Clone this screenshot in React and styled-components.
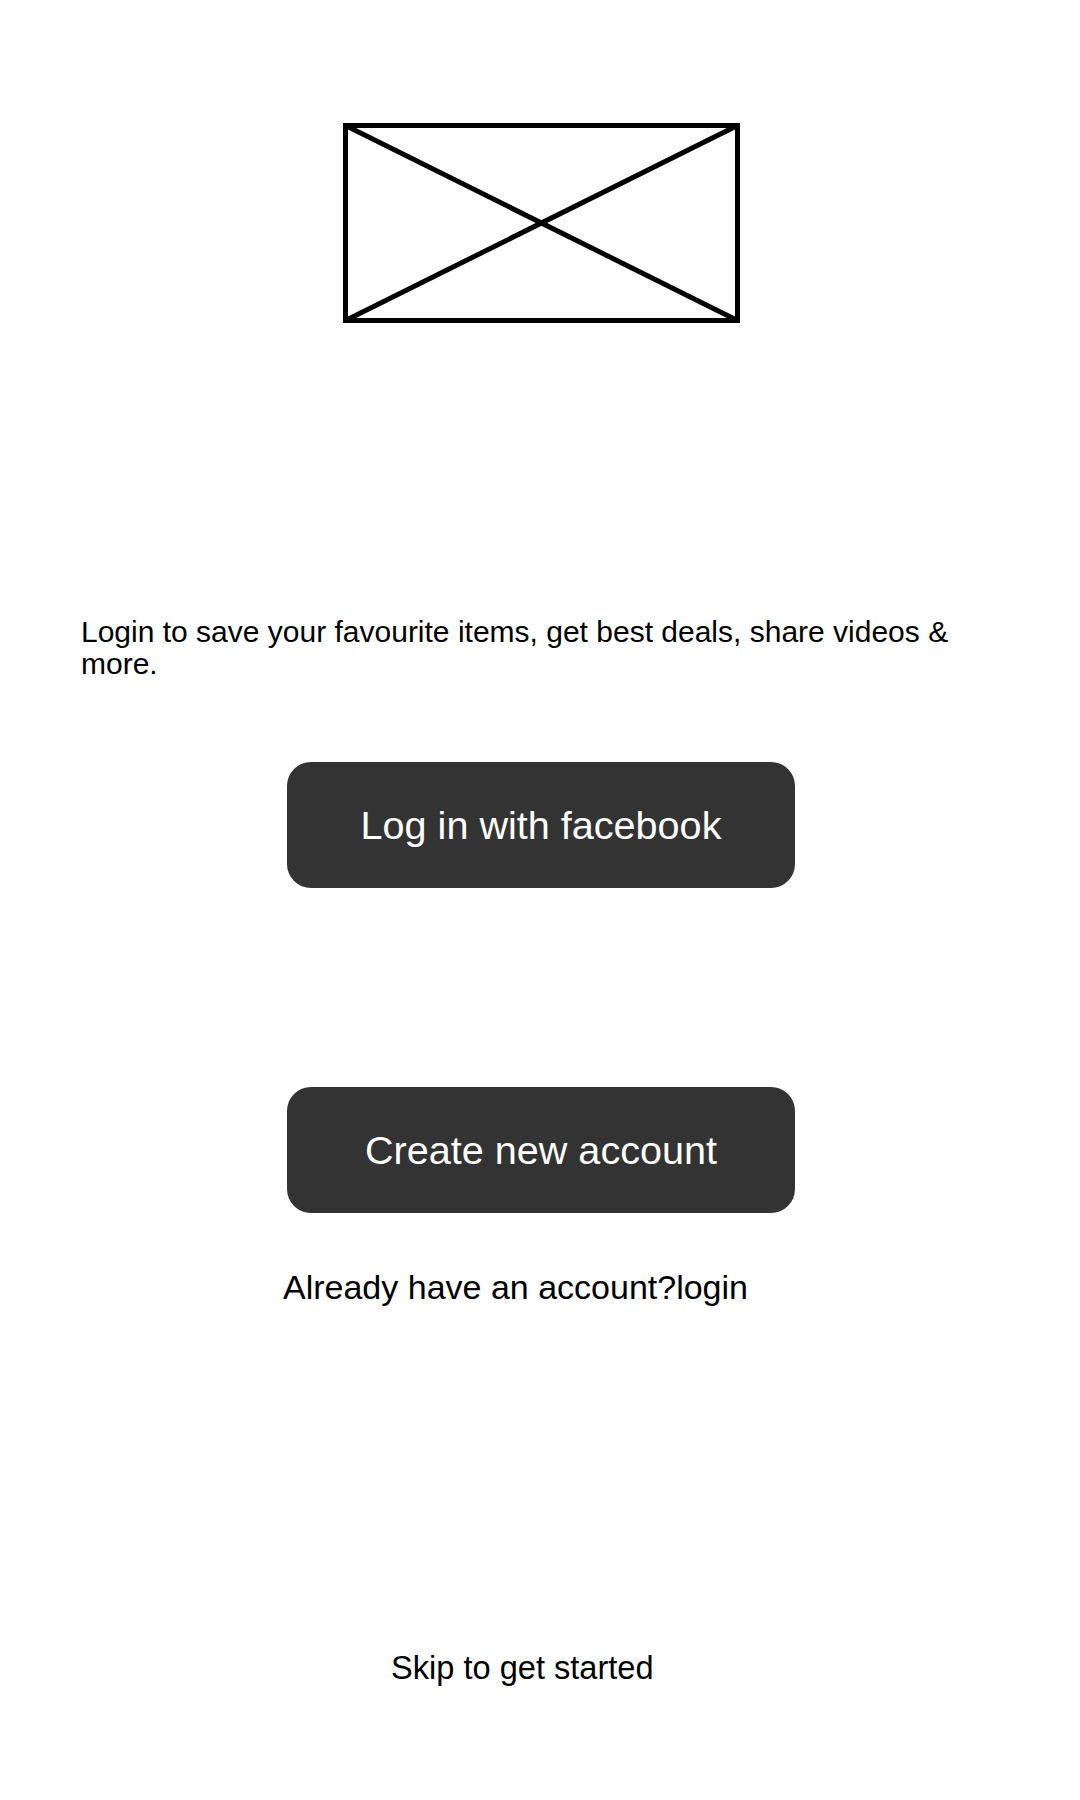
import React from "react";
import styled, { createGlobalStyle } from "styled-components";

const GlobalStyle = createGlobalStyle`
  body {
    margin: 0;
    background: #fff;
    font-family: "Liberation Sans", Arial, sans-serif;
    color: #000;
  }
`;

const Page = styled.div`
  width: 1080px;
  min-height: 1800px;
  display: flex;
  flex-direction: column;
  align-items: flex-start;
  padding-top: 123px;
  box-sizing: border-box;
`;

const Placeholder = styled.svg`
  display: block;
  margin-left: 343px;
  width: 397px;
  height: 200px;
`;

const Intro = styled.p`
  margin: 293px 0 0;
  padding: 0 81px;
  width: 100%;
  box-sizing: border-box;
  font-size: 30px;
  line-height: 32px;
`;

const DarkButton = styled.button`
  margin-top: ${(p) => p.$gap}px;
  margin-left: 287px;
  width: 508px;
  height: 126px;
  border: none;
  border-radius: 24px;
  background: #333333;
  color: #fff;
  font-family: "Liberation Sans", Arial, sans-serif;
  font-size: 39.6px;
  display: flex;
  align-items: center;
  justify-content: center;
  cursor: pointer;
`;

const LinkLine = styled.div`
  margin-top: ${(p) => p.$gap}px;
  padding-left: ${(p) => p.$indent}px;
  font-size: ${(p) => p.$size}px;
  line-height: ${(p) => p.$lh}px;
`;

const App = () => {
  return (
    <>
      <GlobalStyle />
      <Page>
        <Placeholder viewBox="0 0 397 200">
          <rect x="2.5" y="2.5" width="392" height="195" fill="none" stroke="#000" strokeWidth="5" />
          <line x1="2.5" y1="2.5" x2="394.5" y2="197.5" stroke="#000" strokeWidth="5" />
          <line x1="394.5" y1="2.5" x2="2.5" y2="197.5" stroke="#000" strokeWidth="5" />
        </Placeholder>
        <Intro>
          Login to save your favourite items, get best deals, share videos &amp; more.
        </Intro>
        <DarkButton $gap={82}>Log in with facebook</DarkButton>
        <DarkButton $gap={199}>Create new account</DarkButton>
        <LinkLine $gap={55} $indent={283} $size={34} $lh={39}>
          Already have an account?login
        </LinkLine>
        <LinkLine $gap={342} $indent={391} $size={32.6} $lh={37}>
          Skip to get started
        </LinkLine>
      </Page>
    </>
  );
};

export default App;
